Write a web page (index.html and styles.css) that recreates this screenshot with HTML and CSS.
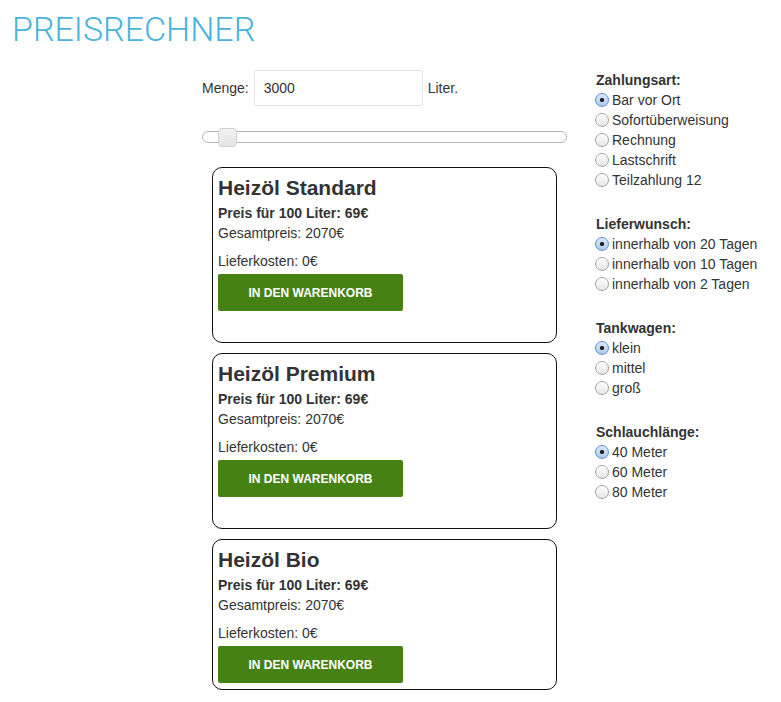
FILE: index.html
```html
<!DOCTYPE html>
<html lang="de">
<head>
    <meta charset="UTF-8">
    <title>Preisrechner</title>
    <link rel="stylesheet" href="styles.css">
</head>
<body>
    <header class="site-header">
        <h1 class="site-title">PREISRECHNER</h1>
    </header>

    <main class="calculator">
        <section class="calc-main">
            <div class="amount-row">
                <label for="amount">Menge:</label>
                <input type="text" id="amount" class="amount-input" value="3000">
                <span>Liter.</span>
            </div>
            <input type="range" class="amount-slider" min="1000" max="45000" step="100" value="3000">

            <div class="product-list">
                <div class="product product-tall">
                    <h2 class="product-name">Heizöl Standard</h2>
                    <p class="product-price">Preis für 100 Liter: 69€</p>
                    <p class="product-total">Gesamtpreis: 2070€</p>
                    <p class="product-delivery">Lieferkosten: 0€</p>
                    <button class="btn-cart">In den Warenkorb</button>
                </div>
                <div class="product product-tall">
                    <h2 class="product-name">Heizöl Premium</h2>
                    <p class="product-price">Preis für 100 Liter: 69€</p>
                    <p class="product-total">Gesamtpreis: 2070€</p>
                    <p class="product-delivery">Lieferkosten: 0€</p>
                    <button class="btn-cart">In den Warenkorb</button>
                </div>
                <div class="product">
                    <h2 class="product-name">Heizöl Bio</h2>
                    <p class="product-price">Preis für 100 Liter: 69€</p>
                    <p class="product-total">Gesamtpreis: 2070€</p>
                    <p class="product-delivery">Lieferkosten: 0€</p>
                    <button class="btn-cart">In den Warenkorb</button>
                </div>
            </div>
        </section>

        <aside class="options">
            <div class="option-group">
                <div class="option-title">Zahlungsart:</div>
                <label class="option"><input type="radio" name="payment" checked> Bar vor Ort</label>
                <label class="option"><input type="radio" name="payment"> Sofortüberweisung</label>
                <label class="option"><input type="radio" name="payment"> Rechnung</label>
                <label class="option"><input type="radio" name="payment"> Lastschrift</label>
                <label class="option"><input type="radio" name="payment"> Teilzahlung 12</label>
            </div>
            <div class="option-group">
                <div class="option-title">Lieferwunsch:</div>
                <label class="option"><input type="radio" name="delivery" checked> innerhalb von 20 Tagen</label>
                <label class="option"><input type="radio" name="delivery"> innerhalb von 10 Tagen</label>
                <label class="option"><input type="radio" name="delivery"> innerhalb von 2 Tagen</label>
            </div>
            <div class="option-group">
                <div class="option-title">Tankwagen:</div>
                <label class="option"><input type="radio" name="truck" checked> klein</label>
                <label class="option"><input type="radio" name="truck"> mittel</label>
                <label class="option"><input type="radio" name="truck"> groß</label>
            </div>
            <div class="option-group">
                <div class="option-title">Schlauchlänge:</div>
                <label class="option"><input type="radio" name="hose" checked> 40 Meter</label>
                <label class="option"><input type="radio" name="hose"> 60 Meter</label>
                <label class="option"><input type="radio" name="hose"> 80 Meter</label>
            </div>
        </aside>
    </main>
</body>
</html>
```

FILE: styles.css
```css
body {
    margin: 0;
    padding: 0;
    background: #fff;
    color: #333;
    font-family: "Liberation Sans", Arial, sans-serif;
    font-size: 14px;
    line-height: 20px;
}

.site-header {
    padding: 9px 0 0 12px;
    height: 70px;
    box-sizing: border-box;
}

.site-title {
    margin: 0;
    font-family: Roboto, "Liberation Sans", sans-serif;
    font-weight: 300;
    font-size: 34px;
    line-height: 40px;
    color: #48b3dd;
}

.calculator {
    display: flex;
    align-items: flex-start;
    gap: 29px;
    padding-left: 202px;
}

.calc-main {
    width: 365px;
}

.amount-row {
    display: flex;
    align-items: center;
    gap: 5px;
}

.amount-input {
    width: 169px;
    height: 36px;
    box-sizing: border-box;
    padding: 0 9px;
    border: 1px solid #e3e3e3;
    border-radius: 2px;
    font-family: inherit;
    font-size: 14px;
    color: #333;
}

.amount-slider {
    -webkit-appearance: none;
    appearance: none;
    display: block;
    width: 365px;
    height: 19px;
    margin: 21px 0 0;
    padding: 0;
    background: transparent;
}

.amount-slider::-webkit-slider-runnable-track {
    height: 12px;
    box-sizing: border-box;
    border: 1px solid #b5b5b5;
    border-radius: 6px;
    background: #fff;
}

.amount-slider::-webkit-slider-thumb {
    -webkit-appearance: none;
    width: 19px;
    height: 19px;
    margin-top: -4px;
    margin-left: -1px;
    box-sizing: border-box;
    border: 1px solid #cfcfcf;
    border-radius: 4px;
    background: linear-gradient(#f1f1f1, #e4e4e4);
}

.product-list {
    display: flex;
    flex-direction: column;
    gap: 10px;
    margin: 21px 0 0 10px;
    width: 345px;
}

.product {
    border: 1px solid #111;
    border-radius: 10px;
    padding: 8px 5px 6px;
}

.product-tall {
    padding-bottom: 31px;
}

.product-name {
    margin: 0 0 3px;
    font-size: 21px;
    line-height: 24px;
    font-weight: bold;
}

.product p {
    margin: 0;
}

.product-price {
    font-weight: bold;
}

.product .product-total {
    margin-bottom: 8px;
}

.btn-cart {
    display: block;
    width: 185px;
    height: 37px;
    margin-top: 3px;
    border: none;
    border-radius: 2px;
    background: #468114;
    color: #fff;
    font-family: inherit;
    font-size: 12px;
    font-weight: bold;
    text-transform: uppercase;
    cursor: pointer;
}

.options {
    display: flex;
    flex-direction: column;
    gap: 24px;
}

.option-title {
    font-weight: bold;
}

.option {
    display: flex;
    align-items: center;
    gap: 3px;
    margin-left: -1px;
}

.option input {
    -webkit-appearance: none;
    appearance: none;
    width: 14px;
    height: 14px;
    margin: 0;
    border: 1px solid #a4a4a4;
    border-radius: 50%;
    background: linear-gradient(#fff, #e6e6e6);
}

.option input:checked {
    border-color: #5f8fd0;
    background: radial-gradient(circle, #222 0 1.8px, transparent 2.4px),
        linear-gradient(#d9e8fa, #a9c8f0);
}
```
